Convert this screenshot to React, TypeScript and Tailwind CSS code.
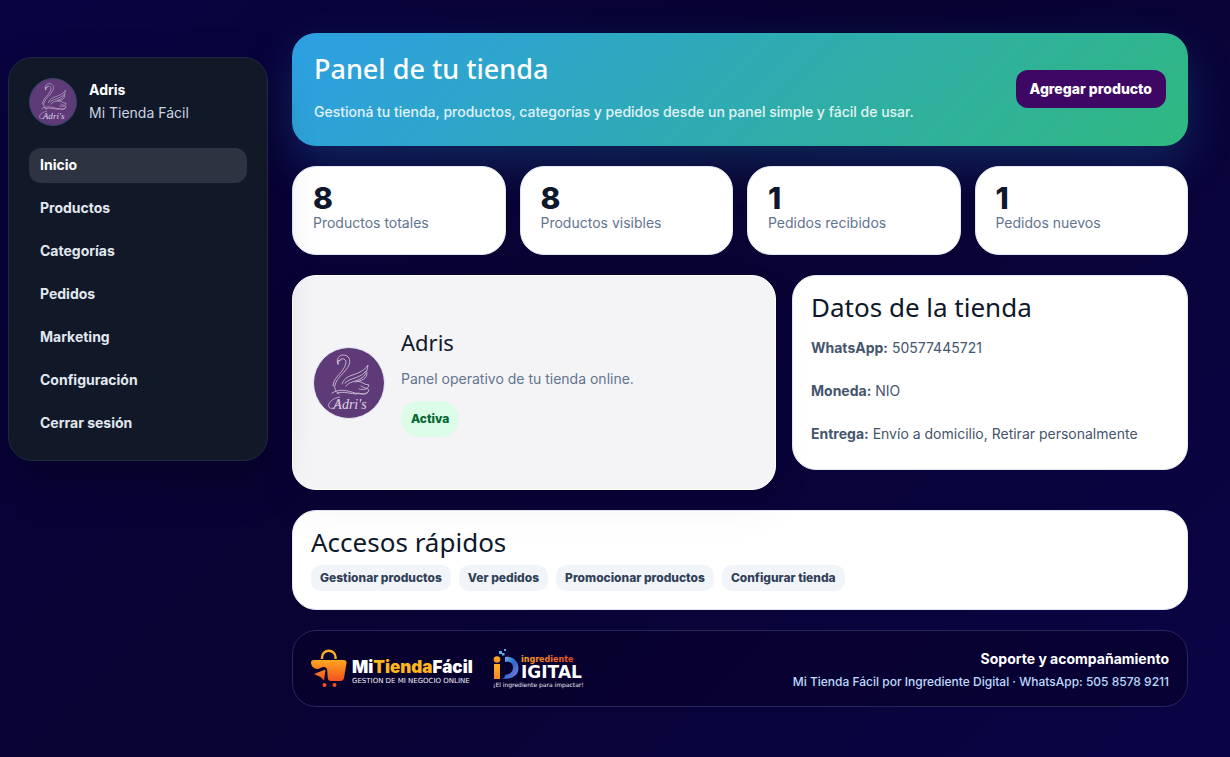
import clsx from "clsx";

const NAV_ITEMS = [
  "Inicio",
  "Productos",
  "Categorías",
  "Pedidos",
  "Marketing",
  "Configuración",
  "Cerrar sesión",
];

const STATS = [
  { value: 8, label: "Productos totales" },
  { value: 8, label: "Productos visibles" },
  { value: 1, label: "Pedidos recibidos" },
  { value: 1, label: "Pedidos nuevos" },
];

const STORE_DATA = [
  { label: "WhatsApp:", value: "50577445721" },
  { label: "Moneda:", value: "NIO" },
  { label: "Entrega:", value: "Envío a domicilio, Retirar personalmente" },
];

const QUICK_LINKS = [
  "Gestionar productos",
  "Ver pedidos",
  "Promocionar productos",
  "Configurar tienda",
];

const StoreAvatar = ({ className }: { className?: string }) => (
  <svg viewBox="0 0 70 70" className={clsx("shrink-0 rounded-full bg-[#5f3a78]", className)}>
    <g fill="none" stroke="#cdbfd6" strokeWidth="0.9" strokeLinecap="round" strokeLinejoin="round">
      <path d="M24 16c-2-5 1-9 5-9 6 0 8 5 6 10-3 7-12 12-14 20-1 4 1 7 4 9" />
      <path d="M24 16c1-4 3-6 6-5 4 2 1 8-2 12-4 5-9 9-9 15" />
      <path d="M24 16l-1-3 4-1" />
      <path d="M28 36c3-8 9-8 16-11 5-2 8-5 10-8-1 6-2 11-8 14-5 3-10 2-14 7" />
      <path d="M31 35c6-6 15-4 21-12M53 25c0 6-6 8-12 9" />
      <path d="M43 33c5 0 7 4 12 4-1 5-6 5-10 4M47 38c4 3 10 2 7 6-2 3-6 2-10 1" />
      <path d="M18 45c8-5 16-2 23 0 5 1 10 2 13-1M23 45c7-2 14 1 20 1" />
    </g>
    <text
      x="36"
      y="61"
      textAnchor="middle"
      fill="#ded3e4"
      fontFamily="'Liberation Serif', serif"
      fontStyle="italic"
      fontSize="14"
    >
      Adri's
    </text>
    <path d="M26 49c-8 1-13 7-11 10s6 1 10-4" fill="none" stroke="#cdbfd6" strokeWidth="0.8" />
  </svg>
);

const MiTiendaLogo = () => (
  <svg viewBox="0 0 166 40" className="h-10 w-[166px]" role="img" aria-label="Mi Tienda Fácil">
    <defs>
      <linearGradient id="bag" gradientUnits="userSpaceOnUse" x1="0" y1="11" x2="0" y2="32">
        <stop offset="0" stopColor="#fda61f" />
        <stop offset="1" stopColor="#f4511e" />
      </linearGradient>
    </defs>
    <path d="M11 10V8.500a6.800 6.800 0 0 1 13.600 0V10" fill="none" stroke="#fbb024" strokeWidth="2.400" />
    <path
      d="M3 11h29.500c2.500 0 3.300 1.200 3 3.200L33 29c-.4 2-1.600 3-3.600 3H20c-2 0-3-1-3.300-3l-.4-7c-.2-3-1.800-4.500-4.300-4L7 20C3 20 .5 17.500 0 14c-.2-2 1-3 3-3z"
      fill="url(#bag)"
    />
    <path d="M3 25l11.500-4.500-1.500 11-3.500-3.500z" fill="url(#bag)" />
    <circle cx="13.500" cy="36" r="2" fill="#f4511e" />
    <circle cx="23.500" cy="36" r="2" fill="#f4511e" />
    <text
      x="41"
      y="24"
      fontFamily="Inter, sans-serif"
      fontWeight="900"
      fontSize="17"
      fill="#ffffff"
    >
      Mi<tspan fill="#fdb71c">Tienda</tspan>Fácil
    </text>
    <text x="41" y="34" fontFamily="'DejaVu Sans', sans-serif" fontSize="7" fill="#f1f1f6">
      GESTION DE MI NEGOCIO ONLINE
    </text>
  </svg>
);

const DigitalLogo = () => (
  <svg viewBox="0 0 94 40" className="h-10 w-[94px]" role="img" aria-label="Ingrediente Digital">
    <defs>
      <linearGradient id="letter-i" x1="0" y1="0" x2="0" y2="1">
        <stop offset="0" stopColor="#fbb321" />
        <stop offset="1" stopColor="#f6862a" />
      </linearGradient>
      <linearGradient id="letter-d" x1="0" y1="0" x2="1" y2="1">
        <stop offset="0" stopColor="#69c4ee" />
        <stop offset="0.5" stopColor="#2f66c9" />
        <stop offset="1" stopColor="#8d86e6" />
      </linearGradient>
      <linearGradient id="word" x1="0" y1="0" x2="1" y2="0">
        <stop offset="0" stopColor="#f9a524" />
        <stop offset="1" stopColor="#e04b23" />
      </linearGradient>
    </defs>
    <circle cx="4" cy="10.500" r="3.300" fill="url(#letter-i)" />
    <rect x="1" y="15" width="6" height="15" fill="url(#letter-i)" />
    <path
      d="M12 8c8-1 13.500 4 13.500 11S20 30 9 30c2-1 3-2 3-4 5-1 8-3 8-7.500S17 12 12 13z"
      fill="url(#letter-d)"
    />
    <path d="M6 2h3v3H6zM11 0h2v2h-2zM9 4h2.500v2.500H9z" fill="#5caee5" />
    <text x="28" y="13" fontFamily="'DejaVu Sans', sans-serif" fontWeight="700" fontSize="8" fill="url(#word)">
      ingrediente
    </text>
    <text x="28" y="29" fontFamily="'DejaVu Sans', sans-serif" fontWeight="700" fontSize="17" fill="#ffffff">
      IGITAL
    </text>
    <text x="0" y="38" fontFamily="'DejaVu Sans', sans-serif" fontSize="6" fill="#e8e8f2">
      ¡El ingrediente para impactar!
    </text>
  </svg>
);

const Sidebar = () => (
  <aside className="relative z-10 mt-6 w-[260px] shrink-0 rounded-3xl border border-[#1e2a42] bg-[#111827] px-5 pt-5 pb-[19px] shadow-[0_18px_45px_rgba(0,0,0,0.28)]">
    <div className="mb-[22px] flex items-center gap-3">
      <StoreAvatar className="size-12 border border-[#334468]" />
      <div className="pb-0.5">
        <strong className="block leading-[23px] font-bold text-white">Adris</strong>
        <span className="block leading-[23px] text-slate-300">Mi Tienda Fácil</span>
      </div>
    </div>
    <nav className="flex flex-col gap-2">
      {NAV_ITEMS.map((item) => (
        <a
          key={item}
          href="#"
          className={clsx(
            "rounded-xl px-[11px] pt-[5px] pb-[7px] leading-[23px] font-bold",
            item === "Inicio" ? "bg-[#2d3341] text-white" : "text-slate-200"
          )}
        >
          {item}
        </a>
      ))}
    </nav>
  </aside>
);

const Card = ({ className, children }: { className?: string; children: React.ReactNode }) => (
  <section className={clsx("rounded-3xl border border-slate-200 bg-white", className)}>
    {children}
  </section>
);

const App = () => {
  return (
    <div className="flex min-h-screen items-start gap-6 bg-[linear-gradient(135deg,#090342_0%,#080331_45%,#0a0446_100%)] pr-[42px] pl-2 pt-[33px] pb-[50px] font-['Inter',sans-serif] text-[14px]">
      <Sidebar />

      <main className="flex min-w-0 flex-1 flex-col gap-5">
        <header className="flex items-center justify-between rounded-3xl bg-[linear-gradient(135deg,#2d9fe3,#30b880)] px-[22px] pt-[17px] pb-[19px] shadow-[0_18px_45px_rgba(45,159,227,0.22)]">
          <div>
            <h1 className="font-['Noto_Sans',sans-serif] text-[27px] leading-[38px] font-medium text-white">
              Panel de tu tienda
            </h1>
            <p className="mt-3 pb-[3px] leading-6 font-medium text-white/85">
              Gestioná tu tienda, productos, categorías y pedidos desde un panel simple y fácil de usar.
            </p>
          </div>
          <a href="#" className="rounded-xl bg-[#3f0764] px-3.5 py-[7px] leading-6 font-extrabold text-white">
            Agregar producto
          </a>
        </header>

        <div className="grid grid-cols-4 gap-3.5">
          {STATS.map((stat) => (
            <Card key={stat.label} className="px-5 pt-[17px] pb-5">
              <strong className="block text-[30px] leading-7 font-extrabold text-slate-900">
                {stat.value}
              </strong>
              <span className="block leading-[22px] text-slate-500">{stat.label}</span>
            </Card>
          ))}
        </div>

        <div className="grid grid-cols-[1.1fr_0.9fr] items-start gap-4">
          <section className="relative flex min-h-[215px] items-center gap-4 rounded-3xl border border-white bg-[#f4f4f7] px-5 shadow-[0_18px_45px_rgba(15,23,42,0.05)]">
            <StoreAvatar className="size-[72px] border border-slate-200" />
            <div>
              <h2 className="font-['Noto_Sans',sans-serif] text-[22px] leading-[26px] text-slate-900">Adris</h2>
              <p className="mt-3 leading-6 text-slate-500">Panel operativo de tu tienda online.</p>
              <span className="mt-2.5 inline-block rounded-full bg-green-100 px-2.5 py-1.5 text-[12px] leading-6 font-extrabold text-green-800">
                Activa
              </span>
            </div>
          </section>

          <Card className="px-[18px] pt-3 pb-[23px]">
            <h2 className="font-['Noto_Sans',sans-serif] text-[26px] leading-[38px] text-slate-900">
              Datos de la tienda
            </h2>
            <div className="mt-2.5 flex flex-col gap-[19px] text-slate-600">
              {STORE_DATA.map((row) => (
                <p key={row.label} className="leading-6">
                  <strong className="font-bold">{row.label}</strong> {row.value}
                </p>
              ))}
            </div>
          </Card>
        </div>

        <Card className="px-[18px] pt-3 pb-[18px]">
          <h2 className="font-['Noto_Sans',sans-serif] text-[26px] leading-[38px] text-slate-900">
            Accesos rápidos
          </h2>
          <div className="mt-1 flex flex-wrap gap-2">
            {QUICK_LINKS.map((link) => (
              <a
                key={link}
                href="#"
                className="rounded-[10px] bg-slate-100 px-[9px] py-[3px] text-[12px] leading-5 font-extrabold text-slate-700"
              >
                {link}
              </a>
            ))}
          </div>
        </Card>

        <footer className="flex items-center justify-between rounded-3xl border border-[#25265a] bg-[#070029]/60 px-[18px] py-[13px]">
          <div className="flex items-center gap-4">
            <MiTiendaLogo />
            <DigitalLogo />
          </div>
          <div className="pt-[3px] text-right">
            <strong className="block leading-6 font-bold text-white">Soporte y acompañamiento</strong>
            <span className="block text-[12px] leading-[22px] font-medium text-blue-200">
              Mi Tienda Fácil por Ingrediente Digital · WhatsApp: 505 8578 9211
            </span>
          </div>
        </footer>
      </main>
    </div>
  );
};

export default App;
